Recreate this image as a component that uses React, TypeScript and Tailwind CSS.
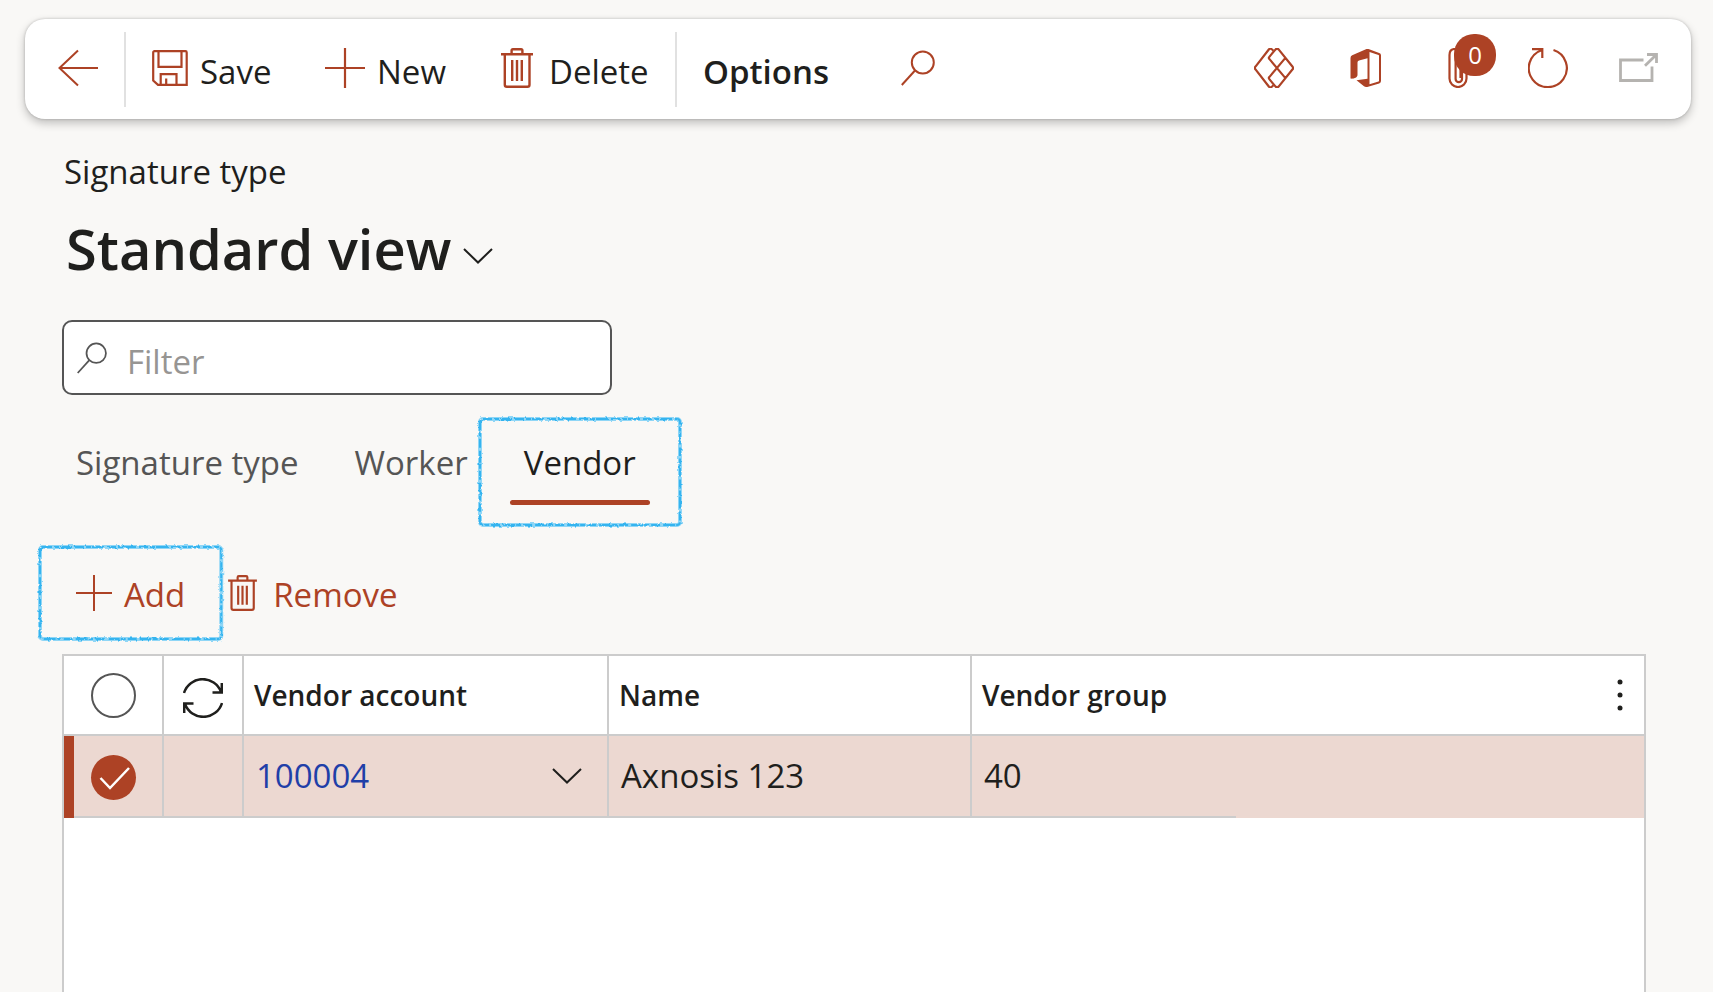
import type { ReactNode } from 'react';

type IconProps = { className?: string };

const BackIcon: React.FC<IconProps> = ({ className }) => (
  <svg viewBox="0 0 40 40" className={className} fill="none" stroke="currentColor" strokeWidth="2" aria-hidden="true">
    <path d="M20 2.5 1.5 20 20 37.5M1.5 20H40" />
  </svg>
);

const SaveIcon: React.FC<IconProps> = ({ className }) => (
  <svg viewBox="0 0 36 36" className={className} fill="none" stroke="currentColor" strokeWidth="2.2" aria-hidden="true">
    <path d="M2.5 1.2h31a1.2 1.2 0 0 1 1.2 1.2v32.4H6L1.2 30.5V2.5a1.3 1.3 0 0 1 1.3-1.3Z" />
    <path d="M6.5 1.5v15.3h23V1.5M8.7 34.5V24.2h15.8v10.3M14.2 28.5v6" />
  </svg>
);

const PlusIcon: React.FC<IconProps> = ({ className }) => (
  <svg viewBox="0 0 40 40" className={className} stroke="currentColor" strokeWidth="2.2" aria-hidden="true">
    <path d="M20 0v40M0 20h40" />
  </svg>
);

const TrashIcon: React.FC<IconProps> = ({ className }) => (
  <svg viewBox="0 0 32 40" className={className} fill="none" stroke="currentColor" strokeWidth="2.4" aria-hidden="true">
    <path d="M0 6.2h32M10.6 6V2.5a1.3 1.3 0 0 1 1.3-1.3h8.2a1.3 1.3 0 0 1 1.3 1.3V6" />
    <path d="M3.8 6.2v30.6a2 2 0 0 0 2 2h20.7a2 2 0 0 0 2-2V6.2M11.2 12v21M16 12v21M20.8 12v21" />
  </svg>
);

const SearchIcon: React.FC<IconProps> = ({ className }) => (
  <svg viewBox="0 0 34 36" className={className} fill="none" stroke="currentColor" strokeWidth="2" aria-hidden="true">
    <circle cx="21.8" cy="12.5" r="11" />
    <path d="M14 20.5.8 35" />
  </svg>
);

const DataverseIcon: React.FC<IconProps> = ({ className }) => (
  <svg viewBox="0 0 40 40" className={className} fill="none" stroke="currentColor" strokeWidth="2.2" strokeLinejoin="round" aria-hidden="true">
    <path d="m19.5 2.8-1.7-1.5a2 2 0 0 0-2.8 0L1.5 18.6a2 2 0 0 0 0 2.8L15 38.7a2 2 0 0 0 2.8 0l1.7-1.5" />
    <path d="M21.6 1.4a2 2 0 0 1 3 0L38.6 18.7a2 2 0 0 1 0 2.6L24.6 38.6a2 2 0 0 1-3 0l-6.3-7.5a1.5 1.5 0 0 1 0-2L31 10.4M21.6 1.4l-6.3 7.5a1.5 1.5 0 0 0 0 2L31 29.6" />
  </svg>
);

const OfficeIcon: React.FC<IconProps> = ({ className }) => (
  <svg viewBox="0 0 32 40" className={className} fill="currentColor" aria-hidden="true">
    <path d="M16.5 1 2.2 7.3A3 3 0 0 0 .5 10v20.500c2.800.6 7-.8 7-3.500V14.500a2 2 0 0 1 1.500-2l8.500-2.300v20.600L6.500 32.200 14 38.300c1 .8 2 .9 3.200.6l12-3.500a2.500 2.500 0 0 0 1.800-2.400V7.300a2.500 2.500 0 0 0-1.800-2.400L18.500 1.100a3.500 3.500 0 0 0-2 0Zm3 3.100 9 2.900a.8.800 0 0 1 .5.700v25a.8.800 0 0 1-.5.700l-9 2.900Z" />
  </svg>
);

const ClipIcon: React.FC<IconProps> = ({ className }) => (
  <svg viewBox="0 0 20 40" className={className} fill="none" stroke="currentColor" strokeWidth="2.2" aria-hidden="true">
    <path d="M14 10v21a3.2 3.2 0 0 1-6.4 0V7M18.500 8v22.500a8.500 8.500 0 0 1-17 0V7c0-3.500 2-6 5.500-6s5.500 2.500 5.500 6v23" />
  </svg>
);

const RefreshIcon: React.FC<IconProps> = ({ className }) => (
  <svg viewBox="0 0 40 40" className={className} fill="none" stroke="currentColor" strokeWidth="2.2" aria-hidden="true">
    <path d="M25.5 2A19 19 0 1 1 13.5 2.2M4 1.1h10.3V10" />
  </svg>
);

const PopOutIcon: React.FC<IconProps> = ({ className }) => (
  <svg viewBox="0 0 40 30" className={className} fill="none" stroke="currentColor" strokeWidth="2.8" aria-hidden="true">
    <path d="M24.5 7H1.5v20.5h31.500V13.5M26 12.800 37 2M28 1.500h9.500v8.500" />
  </svg>
);

const SyncIcon: React.FC<IconProps> = ({ className }) => (
  <svg viewBox="0 0 40 40" className={className} fill="none" stroke="currentColor" strokeWidth="2.5" aria-hidden="true">
    <path d="M1 15a19.5 19.5 0 0 1 37-1M38.800 5v9.500H29.500M39 25a19.500 19.500 0 0 1-37 1M1.200 35v-9.500h9.300" />
  </svg>
);

const ChevronIcon: React.FC<IconProps> = ({ className }) => (
  <svg viewBox="0 0 30 16" className={className} fill="none" stroke="currentColor" strokeWidth="2" aria-hidden="true">
    <path d="m1 1 14 13.5L29 1" />
  </svg>
);

// Hand-drawn marker frame laid over the parent
const Highlight: React.FC<{ className: string }> = ({ className }) => (
  <span className={`pointer-events-none absolute ${className}`}>
    <svg className="size-full overflow-visible" fill="none" aria-hidden="true">
      <filter id="marker" x="-5%" y="-5%" width="110%" height="110%">
        <feTurbulence type="fractalNoise" baseFrequency="0.3" numOctaves="2" seed="4" />
        <feDisplacementMap in="SourceGraphic" scale="3" />
      </filter>
      <g filter="url(#marker)">
        <rect width="100%" height="100%" rx="3" stroke="#8fd6f6" strokeWidth="4" />
        <rect width="100%" height="100%" rx="3" stroke="#35b4ef" strokeWidth="2" strokeDasharray="9 2 5 1 12 3" />
      </g>
    </svg>
  </span>
);

const ToolbarButton: React.FC<{ icon: ReactNode; label: string; className?: string }> = ({
  icon,
  label,
  className = '',
}) => (
  <button type="button" className={`flex items-center ${className}`}>
    <span className="text-[#ad4225]">{icon}</span>
    <span className="pt-2">{label}</span>
  </button>
);

const Divider: React.FC = () => <div className="mt-0.5 h-[75px] w-0.5 shrink-0 bg-[#e1e1e1]" />;

const Toolbar: React.FC = () => (
  <header className="mt-[19px] mr-[22px] ml-[25px] flex h-[100px] shrink-0 items-center rounded-[20px] bg-white pb-0.5 shadow-[0_4px_10px_rgba(0,0,0,0.24),0_0_3px_rgba(0,0,0,0.2)]">
    <button type="button" aria-label="Back" className="mr-[26px] ml-[33px] text-[#ad4225]">
      <BackIcon className="size-10" />
    </button>
    <Divider />
    <div className="flex w-[549px] shrink-0 items-center">
      <ToolbarButton icon={<SaveIcon className="size-9" />} label="Save" className="ml-[26px] w-[173px] gap-3" />
      <ToolbarButton icon={<PlusIcon className="size-10" />} label="New" className="w-[176px] gap-3" />
      <ToolbarButton icon={<TrashIcon className="h-10 w-8" />} label="Delete" className="gap-4" />
    </div>
    <Divider />
    <button type="button" className="ml-[26px] w-[198px] pt-2 text-left font-semibold">
      Options
    </button>
    <button type="button" aria-label="Search" className="text-[#ad4225]">
      <SearchIcon className="h-9 w-[34px]" />
    </button>
    <div className="mr-8 ml-auto flex items-center text-[#ad4225]">
      <button type="button" aria-label="Dataverse" className="mr-14">
        <DataverseIcon className="size-10" />
      </button>
      <button type="button" aria-label="Open in Microsoft Office" className="mr-[66px]">
        <OfficeIcon className="h-10 w-8" />
      </button>
      <button type="button" aria-label="Attachments" className="relative mr-[60px]">
        <ClipIcon className="h-10 w-5" />
        <span className="absolute -top-3.5 left-1.5 flex size-[42px] items-center justify-center rounded-[20px] bg-[#ad4225] text-2xl text-white">
          0
        </span>
      </button>
      <button type="button" aria-label="Refresh" className="mr-[51px]">
        <RefreshIcon className="size-10" />
      </button>
      <button type="button" aria-label="Open in new window" className="text-[#b5b3b0]">
        <PopOutIcon className="h-[30px] w-10" />
      </button>
    </div>
  </header>
);

const Tabs: React.FC = () => (
  <div role="tablist" className="mt-12 flex h-[62px] gap-7 text-[#555]">
    <button type="button" role="tab" aria-selected="false" className="flex px-3.5">
      Signature type
    </button>
    <button type="button" role="tab" aria-selected="false" className="flex px-3.5">
      Worker
    </button>
    <button
      type="button"
      role="tab"
      aria-selected="true"
      className="relative flex flex-col justify-between text-[#1f1f1d]"
    >
      <span className="px-3.5">Vendor</span>
      <span className="h-[5px] w-full rounded-full bg-[#ad4225]" />
      <Highlight className="-inset-x-[30px] -top-6 -bottom-5" />
    </button>
  </div>
);

const VendorGrid: React.FC = () => (
  <div className="mt-[41px] flex-1 border-2 border-b-0 border-[#ccc] bg-white">
    <table className="w-full table-fixed border-separate border-spacing-0 text-left">
      <colgroup>
        <col className="w-[100px]" />
        <col className="w-20" />
        <col className="w-[365px]" />
        <col className="w-[363px]" />
        <col className="w-[264px]" />
        <col />
      </colgroup>
      <thead className="text-[28px]">
        <tr className="h-20 [&>th]:border-b-2 [&>th]:border-[#ccc] [&>th]:p-0 [&>th]:font-semibold">
          <th className="border-r-2">
            <input
              type="checkbox"
              aria-label="Select all rows"
              className="ml-[27px] block size-[45px] appearance-none rounded-full border-2 border-[#555]"
            />
          </th>
          <th className="border-r-2">
            <SyncIcon className="mt-1.5 ml-[19px] size-10" />
          </th>
          <th className="border-r-2">
            <span className="pl-2.5">Vendor account</span>
          </th>
          <th className="border-r-2">
            <span className="pl-2.5">Name</span>
          </th>
          <th>
            <span className="pl-2.5">Vendor group</span>
          </th>
          <th>
            <button type="button" aria-label="Grid options" className="mr-[21px] ml-auto block">
              <svg viewBox="0 0 6 32" className="h-8 w-1.5" fill="currentColor" aria-hidden="true">
                <circle cx="3" cy="3" r="2.5" />
                <circle cx="3" cy="16" r="2.5" />
                <circle cx="3" cy="29" r="2.5" />
              </svg>
            </button>
          </th>
        </tr>
      </thead>
      <tbody>
        <tr className="h-[82px] bg-[#ecd8d1] [&>td]:border-[#ccc] [&>td]:p-0">
          <td className="border-r-2 border-b-2">
            <div className="-mb-0.5 flex h-[82px] items-center border-l-10 border-[#ad4225]">
              <label className="relative ml-[17px] block">
                <input
                  type="checkbox"
                  aria-label="Select row 100004"
                  defaultChecked
                  className="block size-[45px] appearance-none rounded-full bg-[#ad4225]"
                />
                <svg
                  viewBox="0 0 45 45"
                  className="pointer-events-none absolute inset-0 text-white"
                  fill="none"
                  stroke="currentColor"
                  strokeWidth="2.5"
                  aria-hidden="true"
                >
                  <path d="m9.5 23 9.5 10 19-20" />
                </svg>
              </label>
            </div>
          </td>
          <td className="border-r-2 border-b-2" />
          <td className="border-r-2 border-b-2">
            <div className="flex items-center justify-between pr-[25px] pl-3">
              <a href="#100004" className="text-[#1f3fa8]">
                100004
              </a>
              <button type="button" aria-label="Open lookup">
                <ChevronIcon className="h-4 w-[30px]" />
              </button>
            </div>
          </td>
          <td className="border-r-2 border-b-2">
            <span className="pl-3">Axnosis 123</span>
          </td>
          <td className="border-b-2">
            <span className="pl-3">40</span>
          </td>
          <td />
        </tr>
      </tbody>
    </table>
  </div>
);

const App: React.FC = () => (
  <div className="flex h-screen flex-col overflow-hidden bg-[#f9f8f6] font-['Open_Sans','Noto_Sans',sans-serif] text-[33px] leading-10 text-[#1f1f1d]">
    <Toolbar />
    <main className="flex flex-1 flex-col pr-[67px] pl-[62px]">
      <p className="mt-[33px] pl-0.5">Signature type</p>
      <h1 className="mt-5 text-[56px] leading-18 font-semibold">
        <button type="button" className="flex items-center gap-3 pl-1">
          Standard view
          <ChevronIcon className="mt-4 h-4 w-[30px]" />
        </button>
      </h1>
      <label className="mt-9 flex h-[75px] w-[550px] items-center rounded-[10px] border-2 border-[#555] bg-white px-[13px] text-[#555]">
        <SearchIcon className="h-8 w-[30px]" />
        <input
          type="text"
          aria-label="Filter"
          placeholder="Filter"
          className="ml-5 min-w-0 flex-1 pt-2 outline-none placeholder:text-[#979593]"
        />
      </label>
      <Tabs />
      <div className="mt-17 flex h-10 items-center text-[#ad4225]">
        <button type="button" className="relative ml-3.5 flex items-center gap-3">
          <PlusIcon className="size-9" />
          <span className="pt-1">Add</span>
          <Highlight className="-inset-x-9 -top-6 -bottom-6" />
        </button>
        <button type="button" className="ml-[43px] flex items-center gap-4">
          <TrashIcon className="h-9 w-[29px]" />
          <span className="pt-1">Remove</span>
        </button>
      </div>
      <VendorGrid />
    </main>
  </div>
);

export default App;
